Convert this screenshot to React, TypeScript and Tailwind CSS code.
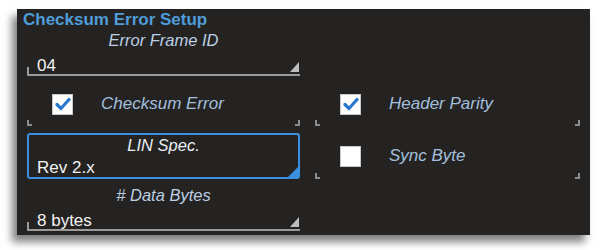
import React from "react";

const FONT = "font-['Liberation_Sans',Arial,sans-serif]";

function Ticks() {
  return (
    <div className="flex h-[6px] justify-between">
      <span className="w-[5px] border-b-2 border-l-2 border-[#8c8c8c]" />
      <span className="w-[5px] border-b-2 border-r-2 border-[#8c8c8c]" />
    </div>
  );
}

function CheckBox({ checked }: { checked: boolean }) {
  return (
    <div className="flex h-[21px] w-[21px] items-center justify-center border border-[#c9c9c9] bg-white">
      {checked && (
        <svg width="16" height="14" viewBox="0 0 16 14">
          <path
            d="M2 7.5 L6 11.5 L14 2.5"
            fill="none"
            stroke="#2b79cc"
            strokeWidth="3.2"
            strokeLinecap="round"
            strokeLinejoin="round"
          />
        </svg>
      )}
    </div>
  );
}

function CheckRow({ label, checked }: { label: string; checked: boolean }) {
  return (
    <div className="flex h-[24px] items-center gap-[28px] pl-[25px]">
      <CheckBox checked={checked} />
      <span className="text-[17px] italic text-[#a3bfdd]">{label}</span>
    </div>
  );
}

function SelectLine({ value }: { value: string }) {
  return (
    <div className="flex h-[20px] items-end border-b-2 border-[#9b9b9b]">
      <span className="h-[7px] border-l-2 border-[#9b9b9b]" />
      <span className="ml-[8px] flex-1 self-center pt-[1px] text-[17px] leading-[20px] text-[#f2f2f2]">
        {value}
      </span>
      <span className="mb-[2px] mr-[1px] h-[10px] w-[9px] bg-[#bdbdbd] [clip-path:polygon(100%_0,100%_100%,0_100%)]" />
    </div>
  );
}

function Label({ text }: { text: string }) {
  return (
    <div className="h-[20px] text-center text-[16.5px] italic leading-[20px] text-[#bccfe4]">
      {text}
    </div>
  );
}

export default function App() {
  return (
    <div className={`h-[250px] w-[600px] bg-white pl-[17px] pt-[9px] ${FONT}`}>
      <div className="h-[226px] w-[573px] bg-[#242321] shadow-[-5px_7px_8px_rgba(0,0,0,0.5)]">
        {/* Title */}
        <div className="h-[21px] pl-[6px] text-[17px] font-bold leading-[21px] text-[#4f9cda]">
          Checksum Error Setup
        </div>

        <div className="pl-[10px]">
          <div className="w-[273px]">
            <Label text="Error Frame ID" />
            <div className="mt-[6px]">
              <SelectLine value="04" />
            </div>
          </div>

          {/* Checkbox row */}
          <div className="mt-[16px] flex gap-[15px]">
            <div className="w-[273px]">
              <CheckRow label="Checksum Error" checked />
              <div className="mt-[4px]">
                <Ticks />
              </div>
            </div>
            <div className="w-[265px]">
              <CheckRow label="Header Parity" checked />
              <div className="mt-[4px]">
                <Ticks />
              </div>
            </div>
          </div>

          {/* LIN spec / Sync byte */}
          <div className="mt-[7px] flex gap-[15px]">
            <div className="relative h-[46px] w-[273px] rounded-[3px] border-2 border-[#3b8fdf]">
              <div className="h-[20px] text-center text-[16.5px] italic leading-[20px] text-[#e9eef5]">
                LIN Spec.
              </div>
              <div className="mt-[4px] pl-[8px] text-[17px] leading-[18px] text-[#f2f2f2]">
                Rev 2.x
              </div>
              <span className="absolute bottom-0 right-0 h-[10px] w-[10px] bg-[#3b8fdf] [clip-path:polygon(100%_0,100%_100%,0_100%)]" />
            </div>
            <div className="w-[265px] pt-[11px]">
              <CheckRow label="Sync Byte" checked={false} />
              <div className="mt-[5px]">
                <Ticks />
              </div>
            </div>
          </div>

          <div className="mt-[6px] w-[273px]">
            <Label text="# Data Bytes" />
            <div className="mt-[6px]">
              <SelectLine value="8 bytes" />
            </div>
          </div>
        </div>
      </div>
    </div>
  );
}
